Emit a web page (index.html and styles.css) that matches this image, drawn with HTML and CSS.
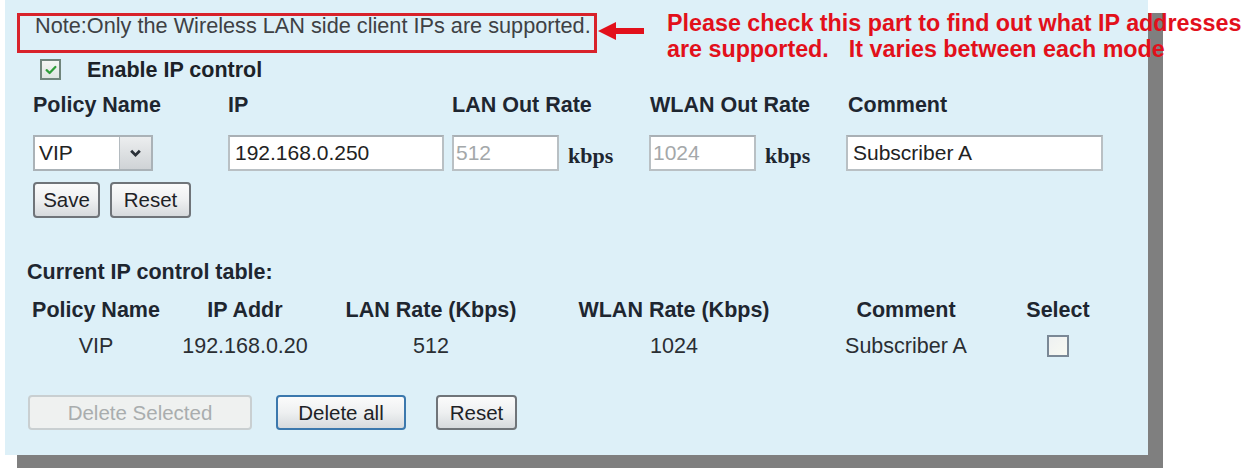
FILE: index.html
```html
<!DOCTYPE html>
<html>
<head>
<meta charset="utf-8">
<title>IP control</title>
<link rel="stylesheet" href="styles.css">
</head>
<body>
<div class="page">
  <div class="panel">
    <div class="note">Note:Only the Wireless LAN side client IPs are supported.</div>

    <div class="enable">
      <span class="chk checked">
        <svg viewBox="0 0 16 16" width="14" height="14"><path d="M3 8.2 L6.4 11.4 L13 4.6" fill="none" stroke="#2f9e3a" stroke-width="2.6" stroke-linecap="round" stroke-linejoin="round"/></svg>
      </span>
      <span class="enable-label">Enable IP control</span>
    </div>

    <div class="form">
      <div class="fh">Policy Name</div>
      <div class="fh">IP</div>
      <div class="fh">LAN Out Rate</div>
      <div class="fh fh-w">WLAN Out Rate</div>
      <div class="fh fh-c">Comment</div>

      <div class="fc">
        <div class="select">
          <span class="sel-val">VIP</span>
          <span class="sel-btn"><svg viewBox="0 0 12 8" width="13" height="9"><path d="M2 1.5 L6 5.5 L10 1.5" fill="none" stroke="#2a3038" stroke-width="2.6"/></svg></span>
        </div>
      </div>
      <div class="fc"><div class="field f-ip">192.168.0.250</div></div>
      <div class="fc"><div class="field f-rate dis">512</div><span class="unit">kbps</span></div>
      <div class="fc"><div class="field f-rate dis">1024</div><span class="unit">kbps</span></div>
      <div class="fc"><div class="field f-cmt">Subscriber A</div></div>
    </div>

    <div class="btns1">
      <span class="btn b-save">Save</span>
      <span class="btn b-reset">Reset</span>
    </div>

    <div class="section">Current IP control table:</div>

    <div class="tbl">
      <div class="th">Policy Name</div>
      <div class="th">IP Addr</div>
      <div class="th">LAN Rate (Kbps)</div>
      <div class="th">WLAN Rate (Kbps)</div>
      <div class="th">Comment</div>
      <div class="th">Select</div>

      <div class="td">VIP</div>
      <div class="td">192.168.0.20</div>
      <div class="td">512</div>
      <div class="td">1024</div>
      <div class="td">Subscriber A</div>
      <div class="td"><span class="chk plain"></span></div>
    </div>

    <div class="btns2">
      <span class="btn b-delsel dis-btn">Delete Selected</span>
      <span class="btn b-delall">Delete all</span>
      <span class="btn b-reset2">Reset</span>
    </div>
  </div>

  <div class="annot">
    <svg class="arrow" viewBox="0 0 50 20" width="50" height="20">
      <rect x="16" y="7" width="31" height="6" fill="#e2101b"/>
      <polygon points="1,10 19,1 19,19" fill="#e2101b"/>
    </svg>
    <div class="annot-text">
      <div>Please check this part to find out what IP addresses</div>
      <div>are supported.<span class="gap">It varies between each mode</span></div>
    </div>
  </div>
</div>
</body>
</html>
```

FILE: styles.css
```css
* { box-sizing: border-box; }

html, body {
  margin: 0;
  padding: 0;
  background: #ffffff;
}

body {
  width: 1248px;
  height: 468px;
  overflow: hidden;
  font-family: "Liberation Sans", Arial, sans-serif;
  color: #1e2630;
}

.page {
  position: relative;
  width: 1248px;
  height: 468px;
}

.panel {
  margin-left: 5px;
  width: 1143px;
  height: 455px;
  padding-top: 13px;
  background: #ddf0f8;
  box-shadow: 15px 13px 0 #7f7f7f, 12px 13px 0 #7f7f7f;
}

/* note box */
.note {
  margin-left: 12px;
  width: 580px;
  height: 40px;
  border: 3px solid #d8222b;
  padding-left: 15px;
  font-size: 21.7px;
  line-height: 20px;
  color: #3e4144;
  white-space: nowrap;
}

/* enable row */
.enable {
  display: flex;
  align-items: flex-start;
  margin-top: 6px;
  margin-left: 35px;
  height: 22px;
}

.chk {
  display: inline-flex;
  align-items: center;
  justify-content: center;
  width: 21px;
  height: 21px;
  border: 2px solid #70857c;
  background: linear-gradient(#f4f6f4, #dfe6e2);
}

.chk.plain {
  width: 22px;
  height: 22px;
  border-color: #7a8896;
  background: linear-gradient(135deg, #eef1f2, #f8f9f2);
}

.enable-label {
  margin-left: 26px;
  padding-top: 1px;
  font-weight: bold;
  font-size: 21.5px;
  line-height: 21px;
  color: #1c2228;
}

/* form grid */
.form {
  display: grid;
  grid-template-columns: 195px 224px 197px 197px 300px;
  row-gap: 18px;
  margin-top: 12px;
  margin-left: 28px;
}

.fh {
  font-weight: bold;
  font-size: 21.5px;
  line-height: 24px;
  color: #1e2630;
}

.fh-w { padding-left: 1px; }
.fh-c { padding-left: 2px; }

.fc {
  display: flex;
  align-items: center;
  height: 36px;
}

.select {
  display: flex;
  width: 120px;
  height: 36px;
  border: 2px solid #aab2b7;
  background: #ffffff;
}

.sel-val {
  flex: 1;
  padding-left: 4px;
  font-size: 21px;
  line-height: 32px;
  color: #222;
}

.sel-btn {
  display: flex;
  align-items: center;
  justify-content: center;
  width: 32px;
  border-left: 1px solid #b4bbc0;
  background: linear-gradient(#eceeef, #cfd3d6);
}

.field {
  height: 36px;
  border: 2px solid #b9c0c4;
  border-top-color: #a9b0b5;
  background: #ffffff;
  padding-left: 5px;
  font-size: 21px;
  line-height: 32px;
  color: #222;
  white-space: nowrap;
}

.f-ip { width: 216px; }
.f-rate { width: 107px; }
.f-cmt { width: 257px; }

.field.dis {
  color: #a4a8aa;
  padding-left: 2px;
}

.unit {
  margin-left: 9px;
  font-family: "Liberation Serif", "Times New Roman", serif;
  font-weight: bold;
  font-size: 22px;
  color: #1e2630;
  padding-top: 6px;
}

/* buttons */
.btn {
  display: inline-flex;
  align-items: center;
  justify-content: center;
  height: 36px;
  border: 2px solid #6f7479;
  border-radius: 4px;
  background: linear-gradient(#fbfbfb 0%, #eef0f1 50%, #d6dadd 100%);
  font-size: 20.5px;
  color: #1e2226;
  white-space: nowrap;
}

.btns1 {
  display: flex;
  gap: 10px;
  margin-top: 11px;
  margin-left: 28px;
}

.b-save { width: 67px; }
.b-reset { width: 81px; }

.section {
  margin-top: 42px;
  margin-left: 22px;
  font-weight: bold;
  font-size: 21.5px;
  line-height: 24px;
  color: #1e2630;
}

/* table */
.tbl {
  display: grid;
  grid-template-columns: 138px 160px 212px 274px 190px 114px;
  margin-top: 14px;
  margin-left: 22px;
}

.th {
  text-align: center;
  font-weight: bold;
  font-size: 21.5px;
  line-height: 24px;
  color: #1e2630;
  white-space: nowrap;
}

.td {
  display: flex;
  align-items: center;
  justify-content: center;
  margin-top: 12px;
  height: 24px;
  font-size: 21.5px;
  line-height: 24px;
  color: #2a2e33;
  white-space: nowrap;
}

.btns2 {
  display: flex;
  margin-top: 37px;
  margin-left: 23px;
}

.btns2 .btn { height: 35px; }

.b-delsel { width: 224px; }
.b-delall { width: 130px; margin-left: 24px; border-color: #3b78ad; }
.b-reset2 { width: 81px; margin-left: 30px; }

.dis-btn {
  border-color: #c9cfd1;
  background: #eff1f0;
  color: #a9adae;
}

/* annotation overlay */
.annot {
  position: absolute;
  top: 0;
  left: 0;
}

.arrow {
  position: absolute;
  left: 597px;
  top: 21px;
}

.annot-text {
  position: absolute;
  left: 667px;
  top: 10px;
  font-weight: bold;
  font-size: 23.3px;
  line-height: 26px;
  color: #e2101b;
  white-space: nowrap;
}

.gap { margin-left: 20px; }
```
